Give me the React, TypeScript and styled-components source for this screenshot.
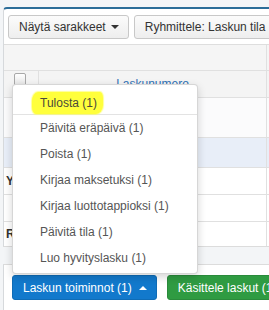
import React from "react";
import styled, { createGlobalStyle, css } from "styled-components";

const Global = createGlobalStyle`
  *, *::before, *::after { box-sizing: border-box; }
  html, body {
    margin: 0;
    padding: 0;
    width: 269px;
    height: 310px;
    overflow: hidden;
    background: #f3f5f7;
    font-family: "Liberation Sans", Arial, sans-serif;
    font-size: 12px;
  }
`;

const Page = styled.div`
  padding: 7px 0 0 3px;
  width: 420px;
`;

const Panel = styled.div`
  background: #fff;
  border-top: 2px solid #2b6d99;
  border-left: 1px solid #d6d9dc;
  border-top-left-radius: 4px;
  border-bottom: 1px solid #dcdcdc;
`;

const Toolbar = styled.div`
  display: flex;
  gap: 5px;
  padding: 6px 0 5px 4px;
`;

const DefaultButton = styled.button`
  display: flex;
  align-items: center;
  gap: 5px;
  height: 24px;
  padding: 0 9px 0 10px;
  border: 1px solid #c8c8c8;
  border-radius: 3px;
  background: linear-gradient(#fbfbfb, #eeeeee);
  color: #333;
  font-family: inherit;
  font-size: 12px;
  white-space: nowrap;
`;

const Caret = styled.span<{ $up?: boolean; $color: string }>`
  width: 0;
  height: 0;
  border-left: 4px solid transparent;
  border-right: 4px solid transparent;
  ${(p) =>
    p.$up
      ? css`border-bottom: 4px solid ${p.$color};`
      : css`border-top: 4px solid ${p.$color};`}
`;

const Strip = styled.div`
  display: grid;
  grid-template-columns: 35px 228px 1fr;
  height: 26px;
  border-top: 1px solid #dedede;
  background: #f5f5f5;
`;

const Row = styled.div<{ $h: number; $bg: string }>`
  display: grid;
  grid-template-columns: 35px 228px 1fr;
  height: ${(p) => p.$h}px;
  border-top: 1px solid #e0e0e0;
  background: ${(p) => p.$bg};
`;

const Cell = styled.div<{ $divider?: boolean; $center?: boolean }>`
  display: flex;
  align-items: center;
  justify-content: ${(p) => (p.$center ? "center" : "flex-start")};
  border-right: ${(p) => (p.$divider ? "1px solid #e0e0e0" : "none")};
  padding-left: ${(p) => (p.$center ? 0 : 1)}px;
  overflow: hidden;
`;

const CheckCell = styled(Cell)`
  align-items: flex-start;
  padding: 2px 0 0 10px;
`;

const CheckBox = styled.span`
  width: 12px;
  height: 13px;
  border: 1px solid #a8a8a8;
  border-radius: 2px;
  background: linear-gradient(#ffffff, #e4e4e4);
`;

const HeaderLink = styled.span`
  color: #2f72b6;
  font-size: 12px;
  margin-top: -1px;
`;

const GroupLabel = styled.span`
  font-weight: bold;
  color: #333;
  padding-left: 1px;
`;

const Gap = styled.div`
  height: 17px;
`;

const Footer = styled.div`
  display: flex;
  gap: 10px;
  background: #fff;
  border-top: 1px solid #dcdcdc;
  border-left: 1px solid #d6d9dc;
  padding: 10px 0 10px 8px;
`;

const DropWrap = styled.div`
  position: relative;
`;

const ActionButton = styled.button<{ $bg: string; $border: string }>`
  display: flex;
  align-items: center;
  gap: 7px;
  height: 25px;
  padding: 0 9px 0 10px;
  border: 1px solid ${(p) => p.$border};
  border-radius: 3px;
  background: ${(p) => p.$bg};
  color: #fff;
  font-family: inherit;
  font-size: 12px;
  white-space: nowrap;
`;

const Menu = styled.ul`
  position: absolute;
  left: 0;
  bottom: calc(100% + 1px);
  width: 186px;
  margin: 0;
  padding: 4px 0 2px;
  list-style: none;
  background: #fff;
  border: 1px solid rgba(0, 0, 0, 0.16);
  border-radius: 4px;
  box-shadow: 0 3px 9px rgba(0, 0, 0, 0.17);
`;

const MenuItem = styled.li<{ $first?: boolean }>`
  height: ${(p) => (p.$first ? 25 : 26)}px;
  line-height: ${(p) => (p.$first ? 25 : 26)}px;
  padding-left: 27px;
  color: #555;
  white-space: nowrap;
  display: flex;
  align-items: center;
`;

const Divider = styled.li`
  height: 1px;
  background: #e3e3e3;
`;

const Marker = styled.span`
  display: inline-block;
  margin: 2px 0 0 -8px;
  padding: 0 6px 0 8px;
  height: 22px;
  line-height: 22px;
  background: #ffff3c;
  border-radius: 6px 3px 7px 4px / 9px 6px 9px 7px;
  box-shadow: 0 0 1px 1px rgba(255, 255, 80, 0.6);
  color: #4a4a3a;
`;

const items = [
  "Päivitä eräpäivä (1)",
  "Poista (1)",
  "Kirjaa maksetuksi (1)",
  "Kirjaa luottotappioksi (1)",
  "Päivitä tila (1)",
  "Luo hyvityslasku (1)",
];

export default function App() {
  return (
    <>
      <Global />
      <Page>
        <Panel>
          <Toolbar>
            <DefaultButton>
              Näytä sarakkeet <Caret $color="#333" />
            </DefaultButton>
            <DefaultButton>
              Ryhmittele: Laskun tila <Caret $color="#333" />
            </DefaultButton>
          </Toolbar>
          <Strip>
            <Cell />
            <Cell $divider />
            <Cell />
          </Strip>
          <Row $h={27} $bg="#f4f4f4">
            <CheckCell $divider>
              <CheckBox />
            </CheckCell>
            <Cell $center $divider>
              <HeaderLink>Laskunumero</HeaderLink>
            </Cell>
            <Cell />
          </Row>
          <Row $h={40} $bg="#fbfbfc">
            <Cell />
            <Cell $divider />
            <Cell />
          </Row>
          <Row $h={30} $bg="#e8eef8">
            <Cell />
            <Cell $divider />
            <Cell />
          </Row>
          <Row $h={27} $bg="#fff">
            <Cell>
              <GroupLabel>Y</GroupLabel>
            </Cell>
            <Cell $divider />
            <Cell />
          </Row>
          <Row $h={27} $bg="#fff">
            <Cell />
            <Cell $divider />
            <Cell />
          </Row>
          <Row $h={25} $bg="#fff">
            <Cell>
              <GroupLabel>R</GroupLabel>
            </Cell>
            <Cell $divider />
            <Cell />
          </Row>
        </Panel>
        <Gap />
        <Footer>
          <DropWrap>
            <Menu>
              <MenuItem $first>
                <Marker>Tulosta (1)</Marker>
              </MenuItem>
              <Divider />
              {items.map((t) => (
                <MenuItem key={t}>{t}</MenuItem>
              ))}
            </Menu>
            <ActionButton $bg="#1279cc" $border="#0f6cb6">
              Laskun toiminnot (1) <Caret $up $color="#fff" />
            </ActionButton>
          </DropWrap>
          <ActionButton $bg="#2f9b42" $border="#2a8a3b">
            Käsittele laskut (1) <Caret $up $color="#fff" />
          </ActionButton>
        </Footer>
      </Page>
    </>
  );
}
